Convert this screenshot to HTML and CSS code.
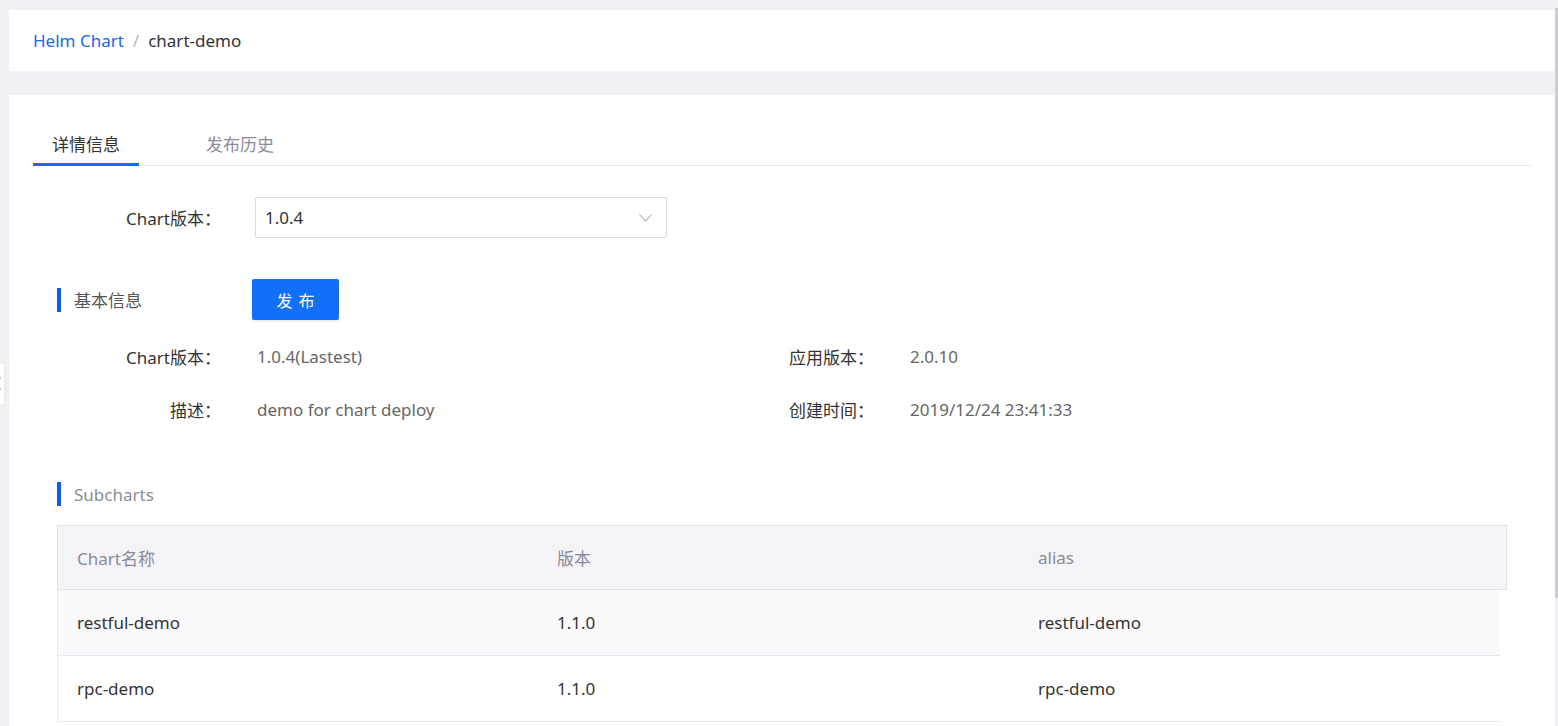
FILE: index.html
```html
<!DOCTYPE html>
<html lang="zh-CN">
<head>
<meta charset="utf-8">
<title>chart-demo</title>
<link rel="stylesheet" href="styles.css">
</head>
<body>
<div class="app">
  <div class="viewport">
    <div class="crumb-card">
      <a class="crumb-link">Helm Chart</a>
      <span class="crumb-sep">/</span>
      <span class="crumb-current">chart-demo</span>
    </div>
    <div class="main-card">
      <div class="tabs">
        <div class="tab active">详情信息</div>
        <div class="tab">发布历史</div>
      </div>
      <div class="section">
        <div class="form-row">
          <div class="label">Chart版本：</div>
          <div class="select">
            <span>1.0.4</span>
            <svg class="chevron" width="13" height="8" viewBox="0 0 13 8"><polyline points="0.5,0.5 6.5,7 12.5,0.5" fill="none" stroke="#a9a9b4" stroke-width="1.1"/></svg>
          </div>
        </div>
        <div class="section-head">
          <div class="section-title">基本信息</div>
          <button class="btn-primary">发布</button>
        </div>
        <div class="info-grid">
          <div class="label">Chart版本：</div>
          <div class="value">1.0.4(Lastest)</div>
          <div class="label">应用版本：</div>
          <div class="value">2.0.10</div>
          <div class="label">描述：</div>
          <div class="value">demo for chart deploy</div>
          <div class="label">创建时间：</div>
          <div class="value">2019/12/24 23:41:33</div>
        </div>
        <div class="section-title muted">Subcharts</div>
        <div class="table">
          <div class="thead">
            <div class="cell">Chart名称</div>
            <div class="cell">版本</div>
            <div class="cell">alias</div>
          </div>
          <div class="trow alt">
            <div class="cell">restful-demo</div>
            <div class="cell">1.1.0</div>
            <div class="cell">restful-demo</div>
          </div>
          <div class="trow">
            <div class="cell">rpc-demo</div>
            <div class="cell">1.1.0</div>
            <div class="cell">rpc-demo</div>
          </div>
        </div>
      </div>
    </div>
  </div>
  <div class="scrollbar"><div class="thumb"></div></div>
  <div class="edge-handle"></div>
</div>
</body>
</html>
```
FILE: styles.css
```css
* { box-sizing: border-box; }
html, body { margin: 0; height: 100%; }
body {
  background: #f0f1f5;
  font-family: "Noto Sans", "Noto Sans CJK SC", sans-serif;
  font-size: 17px;
  color: #333;
  overflow: hidden;
}
.app { display: flex; height: 100vh; position: relative; }
.viewport {
  flex: 1;
  padding: 10px 0 0 9px;
  overflow: hidden;
  display: flex;
  flex-direction: column;
  gap: 24px;
}
.crumb-card {
  background: #fff;
  height: 61px;
  flex-shrink: 0;
  display: flex;
  align-items: center;
  padding-left: 24px;
}
.crumb-link { color: #1469f5; cursor: pointer; }
.crumb-sep { color: #b4b4c0; margin: 0 9px; }
.crumb-current { color: #333; }

.main-card {
  background: #fff;
  flex: 1 0 auto;
  padding: 28px 24px 160px;
}
.tabs {
  display: flex;
  gap: 48px;
  border-bottom: 1px solid #e6e6eb;
}
.tab {
  height: 43px;
  padding: 0 19px;
  display: flex;
  align-items: center;
  border-bottom: 3px solid transparent;
  margin-bottom: -1px;
  color: #8c8c99;
}
.tab.active { color: #333; border-bottom-color: #0f6cf5; }

.section { padding: 0 24px; }
.form-row {
  margin-top: 31px;
  display: flex;
  align-items: center;
}
.label { text-align: right; color: #333; }
.form-row .label { width: 164px; margin-right: 34px; }
.select {
  width: 412px;
  height: 41px;
  border: 1px solid #d9d9e0;
  border-radius: 2px;
  padding: 0 14px 0 9px;
  display: flex;
  align-items: center;
  justify-content: space-between;
  color: #333;
}
.section-head {
  margin-top: 41px;
  height: 41px;
  display: flex;
  align-items: center;
}
.section-title {
  width: 195px;
  height: 24px;
  display: flex;
  align-items: center;
  gap: 13px;
  color: #555;
}
.section-title::before {
  content: "";
  width: 4px;
  height: 24px;
  background: #0b5cf7;
}
.section-title.muted { margin-top: 46px; color: #8c8c99; width: auto; }
.btn-primary {
  width: 87px;
  height: 41px;
  border: none;
  border-radius: 2px;
  background: #116ffa;
  color: #fff;
  font-family: inherit;
  font-size: 16px;
  letter-spacing: 6px;
  padding: 0 0 0 6px;
  box-shadow: 0 2px 0 rgba(0,0,0,0.05);
}
.info-grid {
  margin-top: 10px;
  display: grid;
  grid-template-columns: 164px 417px 164px 1fr;
  column-gap: 36px;
  grid-auto-rows: 53px;
  align-items: center;
}
.value { color: #666; }

.table { margin-top: 19px; }
.thead, .trow {
  display: grid;
  grid-template-columns: 480px 481px 1fr;
  align-items: center;
}
.thead {
  height: 65px;
  background: #f4f4f8;
  border: 1px solid #e2e2e9;
  color: #8a8a99;
}
.trow {
  height: 66px;
  margin-right: 7px;
  border-left: 1px solid #ececf0;
  border-bottom: 1px solid #e8e8ed;
  background: #fff;
}
.trow.alt { background: #fafafc; }
.cell { padding-left: 19px; }

.scrollbar {
  width: 3px;
  flex-shrink: 0;
  background: #f1f1f6;
  padding-top: 8px;
}
.thumb { height: 590px; background: #cdcdd4; }

.edge-handle {
  position: absolute;
  left: 0;
  top: 363px;
  width: 4px;
  height: 42px;
  background: #fff;
  border-radius: 0 3px 3px 0;
  box-shadow: 0 0 3px rgba(0,0,0,0.08);
}
.edge-handle::before {
  content: "";
  position: absolute;
  left: 0;
  top: 14px;
  width: 1px;
  height: 2px;
  background: #c4c4cc;
  box-shadow: 0 11px 0 #c4c4cc;
}
```
